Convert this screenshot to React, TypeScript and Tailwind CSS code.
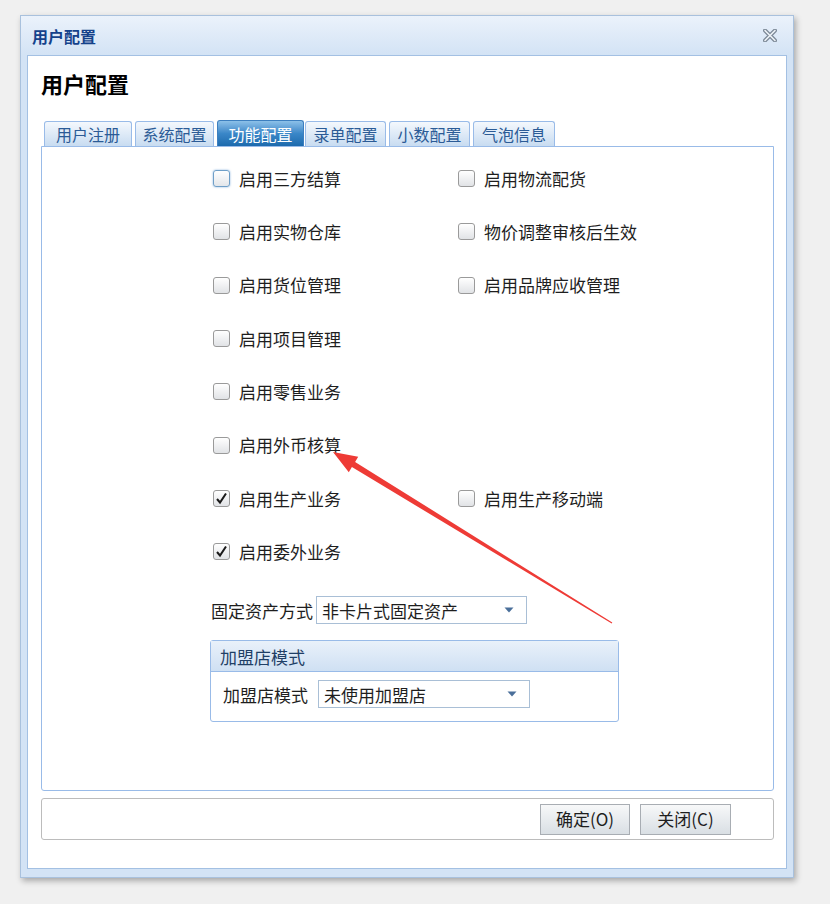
import React from 'react'

const tabs = [
  { label: '用户注册', w: 'w-[88px]', ml: 'ml-[3px]' },
  { label: '系统配置', w: 'w-[79px]', ml: 'ml-[3px]' },
  { label: '功能配置', w: 'w-[87px]', ml: 'ml-[3px]', active: true },
  { label: '录单配置', w: 'w-[81px]', ml: 'ml-[1px]' },
  { label: '小数配置', w: 'w-[81px]', ml: 'ml-[3px]' },
  { label: '气泡信息', w: 'w-[82px]', ml: 'ml-[3px]' },
]

type Opt = { label: string; checked?: boolean; focus?: boolean }

const rows: [Opt, Opt | null][] = [
  [{ label: '启用三方结算', focus: true }, { label: '启用物流配货' }],
  [{ label: '启用实物仓库' }, { label: '物价调整审核后生效' }],
  [{ label: '启用货位管理' }, { label: '启用品牌应收管理' }],
  [{ label: '启用项目管理' }, null],
  [{ label: '启用零售业务' }, null],
  [{ label: '启用外币核算' }, null],
  [{ label: '启用生产业务', checked: true }, { label: '启用生产移动端' }],
  [{ label: '启用委外业务', checked: true }, null],
]

function Checkbox({ label, checked, focus }: Opt) {
  return (
    <div className="flex items-center">
      <div
        className={
          focus
            ? 'w-[17px] h-[17px] rounded-[3px] border border-[#6f9fc8] bg-gradient-to-b from-[#ffffff] to-[#e3e6ea] shadow-[0_0_2px_rgba(90,150,210,0.8)] flex items-center justify-center'
            : 'w-[17px] h-[17px] rounded-[3px] border border-[#9a9a9a] bg-gradient-to-b from-[#ffffff] to-[#e1e3e6] flex items-center justify-center'
        }
      >
        {checked && (
          <svg width="13" height="13" viewBox="0 0 13 13">
            <path d="M2 7 L5 10.5 L11 1.5" fill="none" stroke="#1a1a1a" strokeWidth="2" />
          </svg>
        )}
      </div>
      <span className="ml-[9px] text-[17px] text-[#1e1e1e]">{label}</span>
    </div>
  )
}

function Combo({ value, w }: { value: string; w: string }) {
  return (
    <div
      className={`${w} h-[28px] border border-[#a9bfd6] bg-white flex items-center justify-between pl-[5px] pr-[12px]`}
    >
      <span className="text-[17px] text-[#1e1e1e]">{value}</span>
      <svg width="10" height="6" viewBox="0 0 10 6">
        <path d="M0.5 0.5 L9.5 0.5 L5 5.5 Z" fill="#4a6f9a" />
      </svg>
    </div>
  )
}

export default function App() {
  return (
    <div className="relative w-[830px] h-[904px] overflow-hidden bg-[#f0f0f0] font-['Microsoft_YaHei','Noto_Sans_CJK_SC',sans-serif]">
      <div className="pt-[15px] pl-[20px]">
        {/* 窗口 */}
        <div className="w-[774px] h-[863px] border border-[#a9c1dd] bg-[#d3e3f5] shadow-[2px_3px_6px_rgba(0,0,0,0.3)] flex flex-col">
          <div className="h-[39px] bg-gradient-to-b from-[#ebf2fb] to-[#d3e3f5] flex items-center justify-between pl-[11px] pr-[16px]">
            <span className="text-[16px] font-bold text-[#15428b]">用户配置</span>
            <svg width="14" height="13" viewBox="0 0 14 13">
              <path d="M2 1.5 L12 11.5 M12 1.5 L2 11.5" stroke="#7d8a98" strokeWidth="4" strokeLinecap="round" />
              <path d="M2 1.5 L12 11.5 M12 1.5 L2 11.5" stroke="#eef3f8" strokeWidth="1.6" strokeLinecap="round" />
            </svg>
          </div>

          <div className="mx-[6px] mb-[8px] flex-1 bg-white border border-[#a3c0e3] flex flex-col pl-[13px] pr-[12px] pt-[12px]">
            <h1 className="text-[22px] leading-[30px] font-bold text-black">用户配置</h1>

            {/* 标签页 */}
            <div className="mt-[23px] flex items-end h-[25px]">
              {tabs.map((t) => (
                <div
                  key={t.label}
                  className={
                    t.active
                      ? `${t.w} ${t.ml} h-[26px] rounded-t-[3px] border border-b-0 border-[#3d7fbf] bg-gradient-to-b from-[#8cc0e8] via-[#3a87c8] to-[#1c6aad] flex items-center justify-center text-[16px] text-white`
                      : `${t.w} ${t.ml} h-[25px] rounded-t-[3px] border border-b-0 border-[#99bbe8] bg-gradient-to-b from-[#f4f8fd] to-[#c8dcf1] flex items-center justify-center text-[16px] text-[#2b5b96]`
                  }
                >
                  {t.label}
                </div>
              ))}
            </div>

            {/* 功能配置内容 */}
            <div className="h-[645px] border border-[#99bbe8] rounded-b-[3px] pl-[155px] pt-[5px]">
              <div className="ml-[16px]">
                {rows.map(([a, b], i) => (
                  <div key={i} className="h-[53.3px] flex items-center">
                    <div className="w-[245px]">
                      <Checkbox {...a} />
                    </div>
                    {b && <Checkbox {...b} />}
                  </div>
                ))}
              </div>

              <div className="mt-[18px] ml-[14px] flex items-center">
                <span className="w-[105px] text-[17px] text-[#1e1e1e]">固定资产方式</span>
                <Combo value="非卡片式固定资产" w="w-[211px]" />
              </div>

              <div className="mt-[16px] ml-[13px] w-[409px] border border-[#99bbe8] rounded-[3px]">
                <div className="h-[31px] bg-gradient-to-b from-[#e9f1fa] to-[#cfe0f3] border-b border-[#99bbe8] flex items-center pl-[9px] text-[17px] text-[#1f3f66]">
                  加盟店模式
                </div>
                <div className="pt-[8px] pb-[13px] pl-[12px] flex items-center gap-[10px]">
                  <span className="text-[17px] text-[#1e1e1e]">加盟店模式</span>
                  <Combo value="未使用加盟店" w="w-[212px]" />
                </div>
              </div>
            </div>

            {/* 按钮栏 */}
            <div className="mt-[7px] h-[42px] border border-[#bcbcbc] rounded-[3px] flex items-center justify-end gap-[10px] pr-[42px]">
              <button className="w-[90px] h-[31px] border border-[#a8adb3] bg-gradient-to-b from-[#f7f8f9] to-[#d9dfe4] text-[17px] text-[#1e1e1e]">
                确定(O)
              </button>
              <button className="w-[91px] h-[31px] border border-[#a8adb3] bg-gradient-to-b from-[#f7f8f9] to-[#d9dfe4] text-[17px] text-[#1e1e1e]">
                关闭(C)
              </button>
            </div>
          </div>
        </div>
      </div>

      {/* 红色箭头标注 */}
      <svg className="absolute left-0 top-0 pointer-events-none" width="830" height="904" viewBox="0 0 830 904">
        <polygon
          points="333,452 358.2,456.8 355.1,461.9 612.3,622.6 611.7,623.4 351.9,467.1 348.8,472.2"
          fill="#ee3b36"
        />
      </svg>
    </div>
  )
}
